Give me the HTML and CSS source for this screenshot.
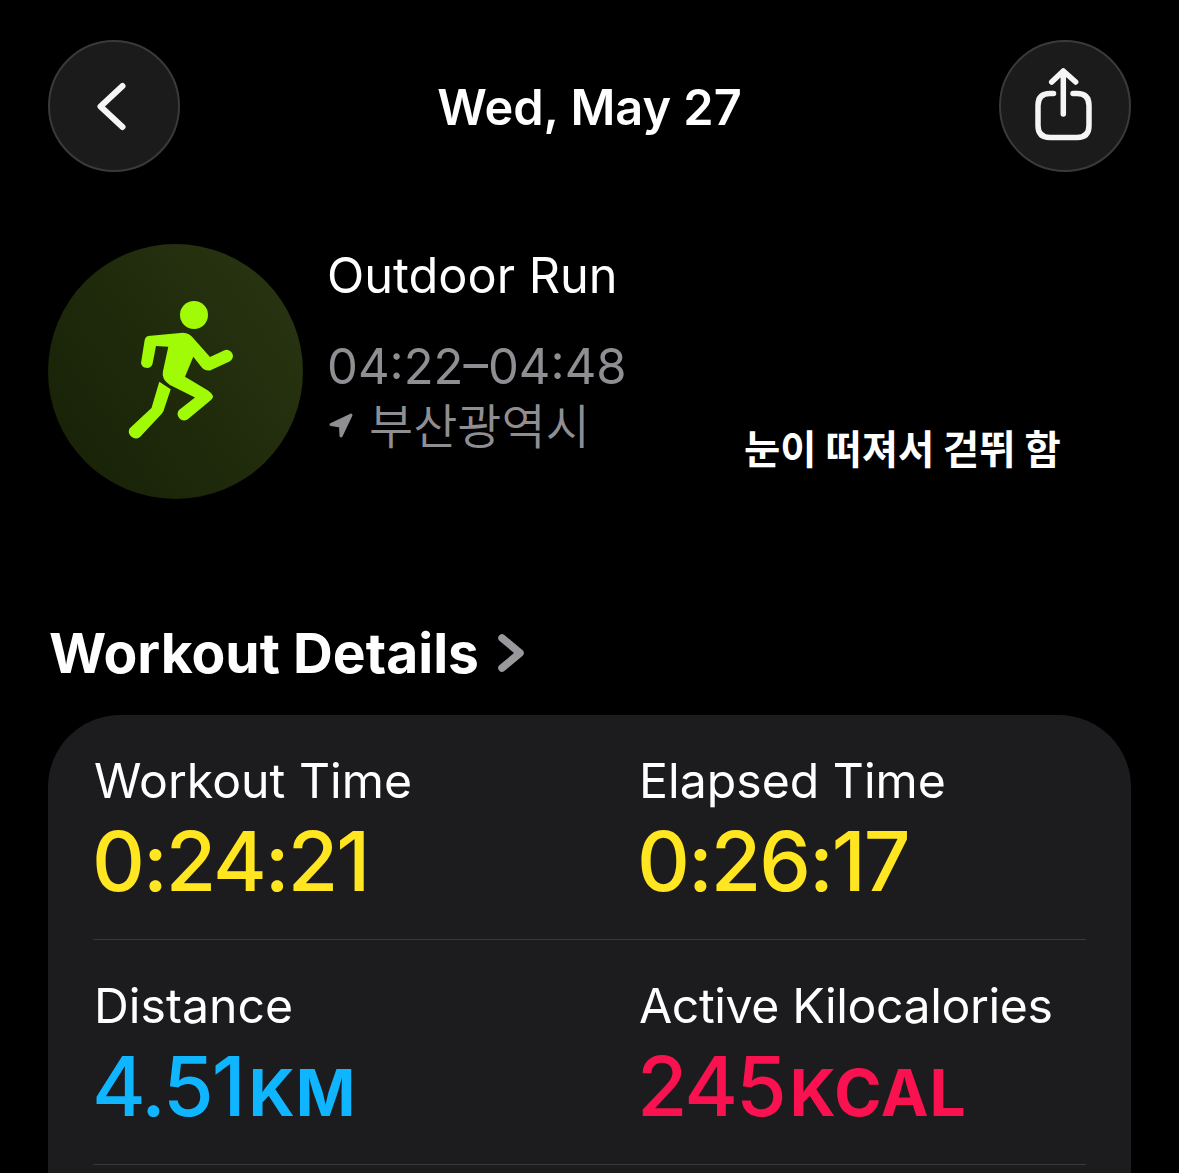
FILE: index.html
```html
<!DOCTYPE html>
<html lang="en">
<head>
<meta charset="utf-8">
<title>Workout</title>
<link rel="stylesheet" href="styles.css">
</head>
<body>
<div class="page">
  <header class="nav">
    <button class="round">
      <svg width="128" height="128" viewBox="0 0 128 128"><path d="M72.500 44 L50.500 64.500 L72.500 85" class="glyph"/></svg>
    </button>
    <h1 class="date">Wed, May 27</h1>
    <button class="round">
      <svg width="128" height="128" viewBox="0 0 128 128"><path class="glyph thin" d="M52.500 51.500H49Q37 51.500 37 63.500V83.500Q37 95.500 49 95.500H76Q88 95.500 88 83.500V63.500Q88 51.500 76 51.500H72M62.300 72V29M50.700 40L62.300 29L74.700 40"/></svg>
    </button>
  </header>
  <section class="summary">
    <div class="badge">
      <svg width="255" height="255" viewBox="0 0 255 255">
        <circle cx="146" cy="71" r="14" class="run"/>
        <path class="run" d="M100 92 L135 88.700 Q142 89 146 95 L162 113 L176 106.500 A6 6 0 0 1 181.500 117.500 L162 126.500 Q156 127 153 122.500 L145.300 112.700 L137 132.700 L160 146.500 Q168 152 163 156 L139.500 175.500 A6.500 6.500 0 0 1 131 166 L147 153.500 L122 141 Q113 135 115 127 L120.300 102.700 L108 102 L104.500 120 A6 6 0 0 1 93 119 L96.500 97 Q97 93 100 92Z"/>
        <path class="run" d="M111.300 137.700 L122.700 145.300 L115.500 167 Q114.500 169 113 170.500 L92 193 A7 7 0 0 1 81.500 184.500 L103.500 164 Z"/>
      </svg>
    </div>
    <div class="info">
      <div class="kind">Outdoor Run</div>
      <div class="time">04:22–04:48</div>
      <div class="place"><svg class="arrow" width="24" height="25" viewBox="0 0 24 25"><path d="M22 2 L2 11.500 L11.500 13 L12 23Z"/></svg><span>부산광역시</span></div>
    </div>
    <div class="note">눈이 떠져서 걷뛰 함</div>
  </section>
  <h2 class="heading">Workout Details<svg width="28" height="40" viewBox="0 0 28 40"><path d="M5 5 L23 20 L5 35" class="more"/></svg></h2>
  <section class="card">
    <div class="row">
      <div class="stat"><div class="label">Workout Time</div><div class="value yellow">0:24:21</div></div>
      <div class="stat"><div class="label">Elapsed Time</div><div class="value yellow">0:26:17</div></div>
    </div>
    <div class="row">
      <div class="stat"><div class="label">Distance</div><div class="value blue">4.51<span class="unit">KM</span></div></div>
      <div class="stat"><div class="label tight">Active Kilocalories</div><div class="value pink">245<span class="unit">KCAL</span></div></div>
    </div>
    <div class="row"></div>
  </section>
</div>
</body>
</html>
```
FILE: styles.css
```css
* { box-sizing: border-box; }
html, body { margin: 0; background: #000; }
body { font-family: Inter, "Noto Sans CJK KR", sans-serif; color: #fff; }
.page { width: 1179px; height: 1173px; overflow: hidden; padding: 40px 48px 0; }
.nav { display: flex; align-items: center; justify-content: space-between; height: 132px; }
.round { width: 132px; height: 132px; border-radius: 50%; background: #1b1b1c; border: 2px solid #3a3a3b; display: flex; align-items: center; justify-content: center; padding: 0; }
.glyph { fill: none; stroke: #f5f5f5; stroke-width: 6; stroke-linecap: round; stroke-linejoin: round; }
.thin { stroke-width: 5.500; }
.date { margin: 4px 0 0; font-size: 48.700px; font-weight: 600; line-height: 56px; }
.summary { display: flex; align-items: flex-start; margin-top: 72px; height: 254px; position: relative; }
.badge { width: 255px; height: 255px; border-radius: 50%; background: linear-gradient(55deg, #162006, #2a3612); flex: none; }
.run { fill: #a2fb06; }
.info { margin-left: 24px; }
.kind { font-size: 48.700px; line-height: 56px; margin-top: 4px; font-weight: 400; }
.time { font-size: 49px; line-height: 56px; margin-top: 35px; color: #8e8e93; font-weight: 400; }
.place { display: flex; align-items: center; gap: 16px; padding-left: 2px; font-size: 48px; line-height: 56px; color: #8e8e93; font-family: "Noto Sans CJK KR", sans-serif; font-weight: 350; }
.arrow { fill: #8e8e93; stroke: #8e8e93; stroke-width: 3; stroke-linejoin: round; margin-top: 4px; }
.note { position: absolute; left: 696px; top: 179px; font-family: "Noto Sans CJK KR", sans-serif; font-size: 39.400px; font-weight: 700; line-height: 48px; }
.heading { display: flex; align-items: center; gap: 18px; margin: 123px 0 0 1px; font-size: 55.200px; line-height: 64px; font-weight: 700; }
.more { fill: none; stroke: #98989d; stroke-width: 7.500; stroke-linecap: round; stroke-linejoin: round; }
.card { margin-top: 30px; height: 600px; border-radius: 72px; background: #1c1c1e; padding: 0 45px; }
.row { display: grid; grid-template-columns: 545px 1fr; height: 225px; padding-top: 37px; border-bottom: 1px solid #38383a; }
.stat { padding-left: 1px; }
.label { font-size: 48.200px; line-height: 58px; font-weight: 400; }
.tight { letter-spacing: -.4px; }
.value { font-size: 82px; line-height: 80px; font-weight: 500; margin: 12px 0 0 -2px; letter-spacing: -2px; }
.unit { font-size: 64px; font-weight: 700; letter-spacing: 1px; margin-left: 5px; }
.yellow { color: #ffe620; }
.blue { color: #0fb5ff; }
.pink { color: #fa1150; }
```
